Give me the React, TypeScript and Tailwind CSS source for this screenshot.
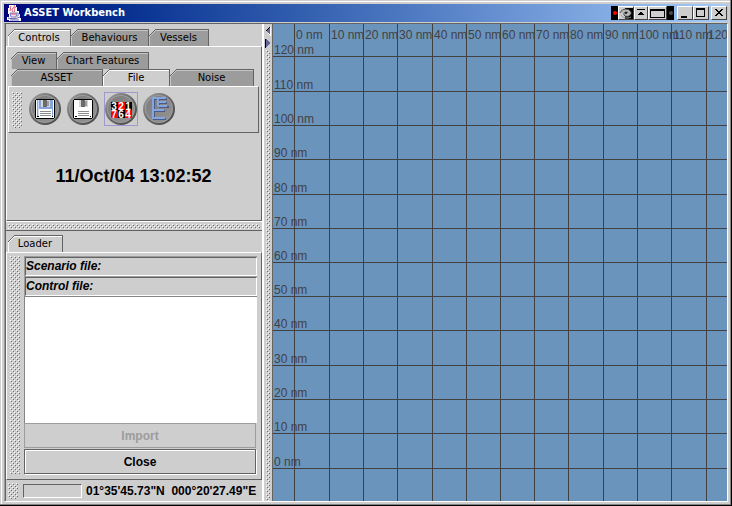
import type { ReactNode } from "react";

function Bumps({ id, className }: { id: string; className: string }) {
  return (
    <svg className={className} shapeRendering="crispEdges" aria-hidden="true">
      <defs>
        <pattern id={id} width="4" height="4" patternUnits="userSpaceOnUse">
          <rect x="0" y="0" width="1" height="1" fill="#ffffff" />
          <rect x="2" y="2" width="1" height="1" fill="#ffffff" />
          <rect x="1" y="1" width="1" height="1" fill="#6b6b6b" />
          <rect x="3" y="3" width="1" height="1" fill="#6b6b6b" />
        </pattern>
      </defs>
      <rect width="100%" height="100%" fill={`url(#${id})`} />
    </svg>
  );
}

function Tab({ label, width, active = false }: { label: string; width: string; active?: boolean }) {
  const face = active ? "bg-[#cecece]" : "bg-[#9c9c9c]";
  return (
    <button
      type="button"
      role="tab"
      aria-selected={active}
      className={`relative h-[17px] border-t border-r border-[#636363] text-center font-['DejaVu_Sans',sans-serif] text-[10px] leading-4 whitespace-nowrap ${face} ${width}`}
    >
      <span className={`absolute inset-0 border-t border-l ${active ? "border-white" : "border-[#c6c6c6]"}`} />
      <svg className="absolute -top-px left-0" width="7" height="7" shapeRendering="crispEdges" aria-hidden="true">
        <path d="M0 0h7L0 7z" fill="#cecece" />
        <path d="M0 6h1V5h1V4h1V3h1V2h1V1h1V0h1v1H6v1H5v1H4v1H3v1H2v1H1v1H0z" fill="#636363" />
        <path d="M1 6h1V5h1V4h1V3h1V2h1V1h1v1H6v1H5v1H4v1H3v1H2v1H1z" fill={active ? "#fff" : "#c6c6c6"} />
      </svg>
      <span className="relative">{label}</span>
    </button>
  );
}

function Disc({ children }: { children: ReactNode }) {
  return (
    <svg width="32" height="32" viewBox="0 0 32 32" aria-hidden="true">
      <defs>
        <linearGradient id="rim" x1="0" y1="0" x2="1" y2="1">
          <stop offset="0" stopColor="#a5a5a5" />
          <stop offset="0.45" stopColor="#6b6b6b" />
          <stop offset="1" stopColor="#424242" />
        </linearGradient>
        <linearGradient id="dish" x1="0" y1="0" x2="1" y2="1">
          <stop offset="0" stopColor="#7b7b7b" />
          <stop offset="1" stopColor="#949494" />
        </linearGradient>
      </defs>
      <circle cx="16" cy="16" r="16" fill="url(#rim)" />
      <circle cx="16" cy="16" r="14" fill="#9c9c9c" />
      <circle cx="16" cy="16" r="13" fill="url(#dish)" />
      {children}
    </svg>
  );
}

function Floppy({ tint }: { tint: string }) {
  return (
    <g shapeRendering="crispEdges">
      <path d="M7 6h18v1h1v18h-1v1H7v-1H6V7h1z" fill="#000" />
      <path d="M7 7h18v18H7z" fill="#fff" />
      <path d="M8 7h16v17H8z" fill={tint} />
      <path d="M9 7h1v16H9z" fill="#fff" opacity="0.6" />
      <path d="M12 7h9v7h-9z" fill="#d6d6d6" />
      <path d="M14 7h4v7h-4z" fill="#6b6b6b" />
      <path d="M18 8h2v5h-2z" fill="#9c9c9c" />
      <path d="M10 16h13v9H10z" fill="#fff" />
      <path d="M11 18h11v1H11zM11 20h11v1H11zM11 22h11v1H11z" fill="#8c8c8c" />
      <path d="M8 23h2v1H8zM23 23h1v1h-1z" fill="#000" />
    </g>
  );
}

const digits = ["3", "2", "1", "7", "6", "4"];
const digitFills = ["#000", "#f00", "#000", "#f00", "#000", "#f00"];

function NumberTiles() {
  return (
    <g fontFamily="Liberation Sans" fontWeight="bold" fontSize="10" textAnchor="middle">
      {digits.map((digit, i) => {
        const x = 6 + (i % 3) * 7;
        const y = 9 + Math.floor(i / 3) * 8;
        return (
          <g key={digit}>
            <rect x={x} y={y} width="7" height="8" fill={digitFills[i]} shapeRendering="crispEdges" />
            <text x={x + 3} y={y + 8} fill="#fff">
              {digit}
            </text>
          </g>
        );
      })}
    </g>
  );
}

function Tree() {
  return (
    <g fill="none" shapeRendering="crispEdges" strokeWidth="2">
      <path d="M11 5v22M10 6h14M16 6v7M16 10h8M16 14h10M11 18h11M11 26h12" stroke="#4a5a84" />
      <path d="M10 4v22M10 5h13M15 5v8M15 9h8M15 13h9M10 17h11M10 25h12" stroke="#84a5de" />
    </g>
  );
}

function Tool({ label, focused = false, children }: { label: string; focused?: boolean; children: ReactNode }) {
  return (
    <button
      type="button"
      aria-label={label}
      className={`flex size-[34px] items-center justify-center border ${focused ? "border-[#9c9ace]" : "border-transparent"}`}
    >
      <Disc>{children}</Disc>
    </button>
  );
}

const bevel = "border border-t-white border-l-white border-r-[#424242] border-b-[#424242] bg-[#cecece]";

function JavaCup() {
  return (
    <svg width="16" height="16" viewBox="0 0 16 16" aria-hidden="true">
      <path d="M3 0h7v2h1v4h2v3h1v4h1v3H3v-1H1v-3h2V9H2V3h1z" fill="#fff" />
      <path d="M8 0c2 2-4 3-1 7M10 2C6 3 10 4 8 7M5 1c-2 2 1 2-1 5" fill="none" stroke="#de4a63" />
      <path d="M4 8h7l-1 4H5zM11 8c3 0 2 3 0 3" fill="#f7dfe7" stroke="#7b7bbd" />
      <path d="M5 9h5" stroke="#d8506c" />
      <path d="M2 13c4 1 8 1 12-1M4 15h9" fill="none" stroke="#6363ad" />
    </svg>
  );
}

function TitleBar() {
  return (
    <header className="flex h-[18px] shrink-0 items-center bg-linear-to-r from-[#00007b] to-[#a5cbf7] pr-px pl-[2px]">
      <JavaCup />
      <h1 className="ml-[2px] flex-1 font-['DejaVu_Sans_Condensed','DejaVu_Sans',sans-serif] text-[11px] font-bold text-white">
        ASSET Workbench
      </h1>
      <div className="flex h-[14px] bg-black">
        <span className="flex w-[7px] items-center justify-center">
          <span className="size-1 rounded-full bg-[#f00]" />
        </span>
        <button type="button" aria-label="Desktop manager" className={`flex w-4 items-center justify-center ${bevel}`}>
          <svg width="14" height="12" viewBox="0 0 14 12" aria-hidden="true">
            <path d="M6 1h8v11H6z" fill="#000" />
            <path d="M1 6c2-5 9-5 11-1 1 4-5 6-7 3-1-3 3-4 4-2" fill="#b5b5b5" stroke="#4a4a4a" />
            <path d="M2 8c2 3 6 4 10 2" fill="none" stroke="#9c9c9c" />
            <circle cx="7" cy="6" r="1" />
          </svg>
        </button>
        <button type="button" aria-label="Roll up" className={`flex w-[14px] items-center justify-center ${bevel}`}>
          <svg width="12" height="12" shapeRendering="crispEdges" aria-hidden="true">
            <path d="M2 2h8v1H2zM5 5h2v1h1v1h1v1H3V7h1V6h1z" fill="#000" />
          </svg>
        </button>
        <button type="button" aria-label="Span displays" className={`flex w-[19px] items-center justify-center ${bevel}`}>
          <span className="h-[9px] w-[15px] border border-t-2 border-black" />
        </button>
        <span className="flex w-[7px] items-center justify-center">
          <span className="size-1 rounded-full bg-[#4a4a4a]" />
        </span>
      </div>
      <button type="button" aria-label="Minimize" className={`ml-[3px] h-[14px] w-4 ${bevel}`}>
        <svg width="14" height="12" shapeRendering="crispEdges" aria-hidden="true">
          <path d="M3 9h6v2H3z" />
        </svg>
      </button>
      <button type="button" aria-label="Maximize" className={`h-[14px] w-4 ${bevel}`}>
        <svg width="14" height="12" shapeRendering="crispEdges" aria-hidden="true">
          <path d="M2 1h9v9H2zM3 3v6h7V3z" fillRule="evenodd" />
        </svg>
      </button>
      <button type="button" aria-label="Close window" className={`ml-[2px] h-[14px] w-4 ${bevel}`}>
        <svg width="14" height="12" shapeRendering="crispEdges" aria-hidden="true">
          <path d="M3 2h2v1h1v1h2V3h1V2h2v1h-1v1H9v1H8v1h1v1h1v1h1v1H9V8H8V7H6v1H5v1H3V8h1V7h1V6h1V5H5V4H4V3H3z" />
        </svg>
      </button>
    </header>
  );
}

function ControlsPane() {
  return (
    <section className="flex h-[197px] flex-col pt-[5px]">
      <div role="tablist" className="flex pl-[2px]">
        <Tab label="Controls" width="w-[63px]" active />
        <Tab label="Behaviours" width="w-[78px]" />
        <Tab label="Vessels" width="w-[60px]" />
      </div>
      <div className="flex flex-1 flex-col border border-t-white border-r-[#636363] border-b-[#636363] border-l-white pt-[5px] pr-[2px] pl-px">
        <div role="tablist" aria-label="Controls">
          <div className="flex pl-[3px]">
            <Tab label="View" width="w-[46px]" />
            <Tab label="Chart Features" width="w-[92px]" />
          </div>
          <div className="flex pl-[3px]">
            <Tab label="ASSET" width="w-[92px]" />
            <Tab label="File" width="w-[67px]" active />
            <Tab label="Noise" width="w-[84px]" />
          </div>
        </div>
        <div className="flex h-[47px] items-start border border-t-white border-r-[#636363] border-b-[#636363] border-l-white pt-[5px] pl-[3px]">
          <Bumps id="toolbar-bumps" className="h-[36px] w-[10px]" />
          <div className="ml-[6px] flex gap-1">
            <Tool label="Save scenario">
              <Floppy tint="#84a5de" />
            </Tool>
            <Tool label="Save control file">
              <Floppy tint="#ffffff" />
            </Tool>
            <Tool label="Random seed" focused>
              <NumberTiles />
            </Tool>
            <Tool label="Layers">
              <Tree />
            </Tool>
          </div>
        </div>
        <div className="flex flex-1 items-center justify-center pb-[2px] text-lg font-bold">
          <time>11/Oct/04 13:02:52</time>
        </div>
      </div>
    </section>
  );
}

const sunken = "border border-t-[#636363] border-l-[#636363] border-r-white border-b-white";

function FileField({ id, label }: { id: string; label: string }) {
  return (
    <div className="border-t border-l border-[#9c9c9c]">
      <div className={`flex h-[19px] items-center pb-px ${sunken}`}>
        <label htmlFor={id} className="font-bold italic">
          {label}
        </label>
        <input id={id} type="text" readOnly className="ml-1 w-0 min-w-0 flex-1 bg-transparent outline-none" />
      </div>
    </div>
  );
}

function LoaderPane() {
  return (
    <section className="flex min-h-0 flex-1 flex-col pt-[4px]">
      <div role="tablist" className="flex pl-[2px]">
        <Tab label="Loader" width="w-[55px]" active />
      </div>
      <div className="flex min-h-0 flex-1 border border-t-white border-r-[#636363] border-b-[#636363] border-l-white pt-[3px] pr-[4px] pb-[5px] pl-[3px]">
        <Bumps id="loader-bumps" className="h-full w-[10px]" />
        <div className="ml-[4px] flex min-w-0 flex-1 flex-col">
          <FileField id="scenario" label="Scenario file:" />
          <FileField id="control" label="Control file:" />
          <textarea
            aria-label="Load messages"
            className="min-h-0 w-full flex-1 resize-none border-t border-l border-[#848484] bg-white outline-none"
          />
          <button type="button" disabled className="mr-px h-[25px] shrink-0 border border-[#9c9c9c] font-bold text-[#9c9c9c]">
            Import
          </button>
          <button
            type="button"
            className="mt-px mr-px h-[25px] shrink-0 border border-[#636363] font-bold shadow-[inset_1px_1px_0_#fff,1px_1px_0_#fff]"
          >
            Close
          </button>
        </div>
      </div>
    </section>
  );
}

function StatusBar() {
  return (
    <footer className="flex h-[21px] shrink-0 items-center pl-[2px]">
      <Bumps id="status-bumps" className="h-4 w-[10px]" />
      <div className={`ml-[5px] h-[14px] w-[59px] ${sunken}`} />
      <p className="ml-[4px] font-bold whitespace-pre">{`01°35'45.73"N  000°20'27.49"E`}</p>
    </footer>
  );
}

const columns = [21, 56, 90, 124, 159, 193, 227, 261, 295, 330, 364, 398, 433];
const rows = [444, 409, 375, 341, 306, 272, 238, 204, 170, 135, 101, 67, 32];

function Chart() {
  return (
    <svg className="h-full w-full" fill="#424142" fontSize="12" role="img" aria-label="Chart grid">
      <g shapeRendering="crispEdges">
        {columns.map((x) => (
          <rect key={x} x={x} y="0" width="1" height="100%" />
        ))}
        {rows.map((y) => (
          <rect key={y} x="0" y={y} width="100%" height="1" />
        ))}
      </g>
      {columns.map((x, i) => (
        <text key={x} x={x + 2} y="15">
          {i * 10} nm
        </text>
      ))}
      {rows.map((y, i) => (
        <text key={y} x="1" y={y - 2}>
          {i * 10} nm
        </text>
      ))}
    </svg>
  );
}

export default function App() {
  return (
    <div className="h-screen border-r border-b border-black bg-[#cecece] font-['Liberation_Sans',Arial,sans-serif] text-xs text-black">
      <div className="h-full border-r border-b border-[#848484] pt-px pl-px">
        <div className="flex h-full flex-col border-t border-l border-white p-[2px]">
          <TitleBar />
          <main className="mt-px flex min-h-0 flex-1 border border-t-[#636363] border-r-white border-b-white border-l-[#9c9c9c]">
            <div className="flex w-[258px] shrink-0 flex-col border-r border-l border-r-white border-l-[#636363]">
              <ControlsPane />
              <div className="flex h-[10px] shrink-0 items-center border-t border-b border-t-white border-b-[#636363] px-[2px]">
                <Bumps id="split-bumps" className="h-[5px] w-full" />
              </div>
              <LoaderPane />
              <StatusBar />
            </div>
            <div className="flex w-[10px] shrink-0 flex-col items-center border-r border-[#636363] border-l border-l-white">
              <svg width="6" height="26" shapeRendering="crispEdges" aria-hidden="true">
                <path d="M5 3v8L1 7z" fill="#63639c" />
                <path d="M4 3h1v1H4v1H3v1H2v1H1V6h1V5h1V4h1z" fill="#000" />
                <path d="M5 3h1v9H5zM3 9h1v1h1v1H4v-1H3z" fill="#fff" />
                <path d="M1 15v8l4-4z" fill="#63639c" />
                <path d="M0 15h1v9H0z" fill="#000" />
              </svg>
              <Bumps id="divider-bumps" className="w-[4px] flex-1" />
            </div>
            <div className="min-w-0 flex-1 bg-[#6b94bd]">
              <Chart />
            </div>
          </main>
        </div>
      </div>
    </div>
  );
}
